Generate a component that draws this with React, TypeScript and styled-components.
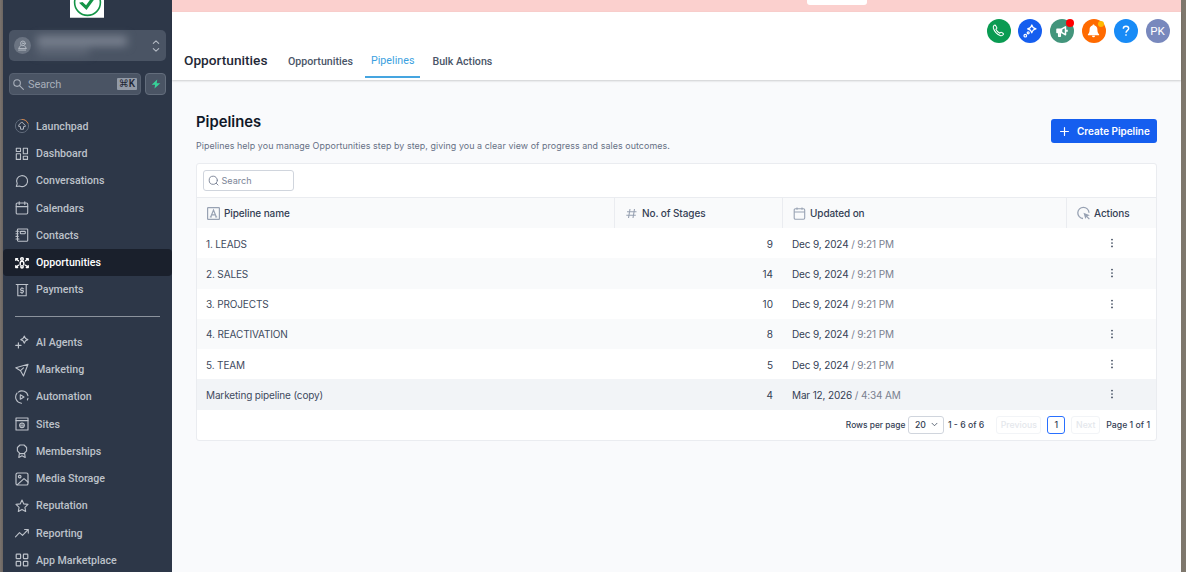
import React from "react";
import styled, { createGlobalStyle } from "styled-components";

const Global = createGlobalStyle`
  * { box-sizing: border-box; }
  html, body { margin: 0; padding: 0; }
  body { font-family: Inter, "Liberation Sans", sans-serif; overflow: hidden; background: #7d766f; }
`;

const Frame = styled.div`
  display: flex;
  width: 1186px;
  height: 572px;
  padding: 0 5px 0 3px;
  overflow: hidden;
  background: linear-gradient(90deg, #7b736d 0, #6b6561 3px, #7d766c 1181px, #7f786d 100%);
`;

const Sidebar = styled.nav`
  width: 169px;
  flex: none;
  display: flex;
  flex-direction: column;
  background: #2d3748;
  font-family: Roboto, "Liberation Sans", sans-serif;
  & > * { flex: none; }
`;

const Logo = styled.div`
  width: 34px;
  height: 17.5px;
  margin-left: 67px;
  overflow: hidden;
  background: #fff;
  border-bottom: 1px solid #c9cbce;
  svg { display: block; }
`;

const Account = styled.div`
  display: flex;
  align-items: center;
  justify-content: space-between;
  width: 157px;
  height: 31px;
  margin: 12.5px 0 0 6px;
  padding: 0 6px 0 5px;
  border-radius: 5px;
  background: #4a5464;
  color: #b4bac4;
  svg { display: block; }
`;

const Avatar = styled.span`
  width: 17px;
  height: 17px;
  border-radius: 50%;
  background: #6b7482;
  display: grid;
  place-items: center;
`;

const Redacted = styled.div`
  flex: 1;
  height: 25px;
  margin: 0 12px 0 6px;
  padding-top: 3px;
  display: flex;
  flex-direction: column;
  gap: 2px;
  filter: blur(4px);
  &::before { content: ""; width: 90px; height: 10px; background: #7a8290; }
  &::after { content: ""; width: 52px; height: 7px; background: #5f6877; }
`;

const SearchRow = styled.div`
  display: flex;
  gap: 4px;
  margin: 12px 0 0 6px;
`;

const SearchBox = styled.div`
  width: 132px;
  height: 22px;
  padding: 0 3px 0 3px;
  display: flex;
  align-items: center;
  border: 1px solid #566070;
  border-radius: 4px;
  background: #4a5464;
  color: #a8afba;
  font-size: 11px;
  span { margin-left: 4px; flex: 1; letter-spacing: -0.1px; }
  kbd {
    font: 500 10px/12px Roboto, "DejaVu Sans", sans-serif;
    color: #1d2533;
    background: #939ba7;
    border-radius: 1px;
    width: 20px;
    text-align: center;
    white-space: nowrap;
  }
`;

const Bolt = styled.div`
  width: 21px;
  height: 22px;
  border-radius: 4px;
  border: 1px solid #636d7c;
  background: #4a5464;
  display: grid;
  place-items: center;
`;

const NavList = styled.div<{ $top: number }>`
  display: flex;
  flex-direction: column;
  margin-top: ${(p) => p.$top}px;
`;

const NavItem = styled.div<{ $active?: boolean }>`
  height: 27.25px;
  flex: none;
  display: flex;
  align-items: center;
  gap: 7px;
  padding-left: 12px;
  border-radius: 4px;
  font-size: 10.65px;
  font-weight: 500;
  color: ${(p) => (p.$active ? "#ffffff" : "#bdc2ca")};
  background: ${(p) => (p.$active ? "#1a202c" : "transparent")};
  svg { flex: none; }
`;

const Divider = styled.div`
  height: 1px;
  margin: 12px 12px 0 12px;
  background: #8c939d;
`;

const Main = styled.main`
  width: 1009px;
  flex: none;
  display: flex;
  flex-direction: column;
  background: #f9fafc;
`;

const Banner = styled.div`
  height: 12px;
  background: #fbd0ce;
  padding-left: 635px;
  &::before {
    content: "";
    display: block;
    width: 60px;
    height: 5px;
    background: #fff;
    border-radius: 0 0 3px 3px;
  }
`;

const Header = styled.header`
  height: 68px;
  background: #fff;
  box-shadow: 0 1px 2px rgba(0, 0, 0, 0.18);
  display: flex;
  flex-direction: column;
  font-family: Roboto, "Liberation Sans", sans-serif;
`;

const RoundRow = styled.div`
  height: 37px;
  padding: 6.5px 11.5px 0 0;
  display: flex;
  justify-content: flex-end;
  gap: 7.8px;
`;

const Round = styled.div<{ $bg: string }>`
  position: relative;
  width: 24px;
  height: 24px;
  border-radius: 50%;
  display: grid;
  place-items: center;
  background: ${(p) => p.$bg};
  color: #fff;
  font-size: 11.5px;
  svg { display: block; }
`;

const Dot = styled.i<{ $color: string; $size: number; $right: number; $top: number }>`
  position: absolute;
  right: ${(p) => p.$right}px;
  top: ${(p) => p.$top}px;
  width: ${(p) => p.$size}px;
  height: ${(p) => p.$size}px;
  border-radius: 50%;
  background: ${(p) => p.$color};
`;

const Tabs = styled.div`
  display: flex;
  padding-left: 12px;
  height: 29px;
`;

const AppTitle = styled.h1`
  margin: 0;
  width: 98px;
  font-size: 13.7px;
  line-height: 22px;
  font-weight: 500;
  color: #1f2937;
`;

const Tab = styled.div<{ $active?: boolean }>`
  height: ${(p) => (p.$active ? 29 : 25)}px;
  padding: ${(p) => (p.$active ? "0 6px" : "1px 6px 0")};
  margin-right: 6px;
  font-size: 10.65px;
  line-height: 23px;
  font-weight: ${(p) => (p.$active ? 400 : 500)};
  letter-spacing: ${(p) => (p.$active ? "0.05px" : "0")};
  white-space: nowrap;
  color: ${(p) => (p.$active ? "#3b9fe0" : "#4a5568")};
  border-bottom: ${(p) => (p.$active ? "2px solid #45a5e0" : "none")};
`;

const Content = styled.section`
  padding: 31px 24px 0 24px;
`;

const Intro = styled.div`
  display: flex;
  justify-content: space-between;
  height: 52px;
`;

const Heading = styled.h2`
  margin: 1px 0 0;
  font-size: 14.8px;
  line-height: 20px;
  font-weight: 600;
  color: #101828;
`;

const Sub = styled.p`
  margin: 7px 0 0;
  font-size: 8.9px;
  line-height: 14px;
  letter-spacing: 0.07px;
  color: #667085;
`;

const Create = styled.button`
  margin-top: 8px;
  width: 106px;
  height: 24px;
  padding: 0 0 0 8px;
  display: flex;
  align-items: center;
  gap: 7px;
  border: 0;
  border-radius: 3px;
  background: #155eef;
  color: #fff;
  font: 600 9.95px Inter, sans-serif;
  white-space: nowrap;
`;

const Card = styled.div`
  width: 961px;
  background: #fff;
  border: 1px solid #eaecf0;
  border-radius: 3px;
`;

const Toolbar = styled.div`
  height: 34px;
  padding: 6px;
  border-bottom: 1px solid #eaecf0;
`;

const Filter = styled.div`
  width: 91px;
  height: 21px;
  padding-left: 4px;
  display: flex;
  align-items: center;
  gap: 2.5px;
  border: 1px solid #d0d5dd;
  border-radius: 3px;
  font-size: 9.1px;
  color: #7b8496;
`;

const Grid = styled.div`
  display: grid;
  grid-template-columns: 417px 168px 284px 90px;
`;

const HeadRow = styled(Grid)`
  height: 30px;
  background: #f9fafb;
`;

const HeadCell = styled.div`
  display: flex;
  align-items: center;
  gap: 4px;
  padding-left: 10px;
  font-size: 10px;
  letter-spacing: -0.1px;
  font-weight: 500;
  color: #344054;
  & + & { border-left: 1px solid #eaecf0; }
  svg { flex: none; }
`;

const BodyRow = styled(Grid)<{ $bg: string }>`
  height: 30.25px;
  padding-top: 1px;
  align-items: center;
  background: ${(p) => p.$bg};
  font-size: 10px;
  letter-spacing: -0.14px;
  color: #475467;
`;

const Name = styled.div`
  padding-left: 9px;
  color: #3e4a5e;
`;
const Count = styled.div`
  padding-right: 9px;
  text-align: right;
  letter-spacing: 0;
  color: #344054;
`;
const When = styled.div`
  padding-left: 10px;
  color: #344054;
  span { color: #79808f; }
`;
const Menu = styled.div`
  display: flex;
  justify-content: center;
  padding: 0 0 1px 2px;
  color: #344054;
`;

const Footer = styled.div`
  height: 30.5px;
  display: flex;
  align-items: center;
  justify-content: flex-end;
  padding-right: 6px;
  font-size: 8.7px;
  font-weight: 500;
  color: #344054;
  white-space: nowrap;
`;

const PerPage = styled.span`
  font-size: 8.4px;
`;

const Pill = styled.div<{ $w: number; $border: string; $color?: string; $m?: string }>`
  width: ${(p) => p.$w}px;
  height: 18px;
  margin: ${(p) => p.$m || "0"};
  display: flex;
  align-items: center;
  justify-content: center;
  gap: 5px;
  border: 1px solid ${(p) => p.$border};
  border-radius: 3px;
  color: ${(p) => p.$color || "#344054"};
`;

type IconProps = { size?: number; w?: number; children: React.ReactNode };
const Icon = ({ size = 14, w = 1.1, children }: IconProps) => (
  <svg width={size} height={size} viewBox="0 0 14 14" fill="none" stroke="currentColor" strokeWidth={w} strokeLinecap="round" strokeLinejoin="round">
    {children}
  </svg>
);

const icons: Record<string, React.ReactNode> = {
  Launchpad: (
    <Icon w={0.9}>
      <circle cx="7" cy="7" r="6.6" stroke="#667080" />
      <path d="M7 .4a6.6 6.6 0 0 1 6 3.8" stroke="#e0853f" />
      <path d="M7 3.2 10.2 6.4v1.2H8.5v2.6H5.5V7.6H3.8V6.4z" />
    </Icon>
  ),
  Dashboard: (
    <Icon>
      <rect x="1.3" y="1.3" width="4.2" height="3.2" /><rect x="8.3" y="1.3" width="4.2" height="5.4" />
      <rect x="1.3" y="6.8" width="4.2" height="5.6" /><rect x="8.3" y="9.2" width="4.2" height="3.2" />
    </Icon>
  ),
  Conversations: <Icon><path d="M1.3 12.5 2.2 9.6A5.5 5.5 0 1 1 4.6 12z" /></Icon>,
  Calendars: <Icon><rect x="1.2" y="2" width="11.5" height="11" rx="1.2" /><path d="M1.2 5.6h11.5M4.2.8v2.6M9.8.8v2.6" /></Icon>,
  Contacts: (
    <Icon>
      <rect x="2.5" y="1" width="10.2" height="12.2" rx=".6" />
      <path d="M1 3.3h3M1 5.8h2.2M1 8.4h2.2M1 11h3" /><rect x="5.3" y="3.4" width="5" height="2.4" rx=".7" />
    </Icon>
  ),
  Opportunities: (
    <Icon w={1.45}>
      <circle cx="7" cy="3" r="1.3" /><path d="M5.2 9V7.1a1.8 1.8 0 0 1 3.6 0V9" /><circle cx="7" cy="10.8" r="1.2" />
      <path d="M.8 4.3V2.6h1.8M13.2 4.3V2.6h-1.8M1.2 3l2.2 1.8M12.800 3l-2.200 1.800M.8 9.700v1.700h1.800M13.200 9.700v1.700h-1.800M1.200 11l2.200-1.800M12.800 11l-2.200-1.800" />
    </Icon>
  ),
  Payments: (
    <Icon>
      <path d="M1.2 1.5h11.6M2.8 1.5v11.3h8.4V1.5" />
      <path d="M8.6 5.7H6.4a.9.9 0 0 0 0 1.8h1.2a.9.9 0 0 1 0 1.8H5.4M7 4.6v1M7 9.4v1" />
    </Icon>
  ),
  "AI Agents": <Icon w={1.2}><path d="M9.3 1.2c.5 2 1.3 2.8 3.5 3.4-2.2.6-3 1.4-3.5 3.5-.5-2.1-1.3-2.9-3.5-3.5 2.2-.6 3-1.4 3.5-3.4zM3.4 7.800v5.200M.8 10.400H6" /></Icon>,
  Marketing: <Icon><path d="M13 1.2.8 4.8l4.7 2.9L8.5 13zM5.5 7.7l3-2.8" /></Icon>,
  Automation: (
    <Icon>
      <path d="M6.5 13.2A6.2 6.2 0 0 1 2 3.2M3.3 2.1A6.2 6.2 0 0 1 13 5.8M13 8.2 12.4 10M5.3 4.8v4.5L9 7z" />
    </Icon>
  ),
  Sites: (
    <Icon>
      <rect x="1" y="1" width="12" height="12" /><path d="M1 3.6h12" /><circle cx="7" cy="8.3" r="2.3" /><path d="M4.7 8.3h4.6M7 6.2v4.2" strokeWidth=".7" />
    </Icon>
  ),
  Memberships: <Icon><path d="M5 1h4l2.6 2.5v3.4L9 9.6H5L2.4 6.9V3.5zM4.4 9.4l-.6 4L7 11.8l3.2 1.6-.6-4" /></Icon>,
  "Media Storage": <Icon w={1.2}><rect x="1" y="1" width="12" height="12" rx="1.6" /><circle cx="4.7" cy="4.6" r="1.3" /><path d="M2.4 12.6 9 6.6l4 3.4" /></Icon>,
  Reputation: <Icon><path d="m7 1.1 1.8 3.8 4.2.5-3.1 2.9.8 4.2L7 10.4l-3.7 2.1.8-4.2L1 5.4l4.2-.5z" /></Icon>,
  Reporting: <Icon><path d="m.5 10.8 4-4.2 3 2.7 5.7-5.8M9.6 3.5h3.7v3.6" /></Icon>,
  "App Marketplace": (
    <Icon w={1.2}>
      <rect x="1.2" y="1.2" width="4.4" height="4.4" rx=".6" /><rect x="8.4" y="1.2" width="4.4" height="4.4" rx=".6" />
      <rect x="1.2" y="8.4" width="4.4" height="4.4" rx=".6" /><rect x="8.4" y="8.4" width="4.4" height="4.4" rx=".6" />
    </Icon>
  ),
};

const primary = ["Launchpad", "Dashboard", "Conversations", "Calendars", "Contacts", "Opportunities", "Payments"];
const secondary = ["AI Agents", "Marketing", "Automation", "Sites", "Memberships", "Media Storage", "Reputation", "Reporting", "App Marketplace"];

const rows = [
  ["1. LEADS", "9", "Dec 9, 2024", "9:21 PM"],
  ["2. SALES", "14", "Dec 9, 2024", "9:21 PM"],
  ["3. PROJECTS", "10", "Dec 9, 2024", "9:21 PM"],
  ["4. REACTIVATION", "8", "Dec 9, 2024", "9:21 PM"],
  ["5. TEAM", "5", "Dec 9, 2024", "9:21 PM"],
  ["Marketing pipeline (copy)", "4", "Mar 12, 2026", "4:34 AM"],
];
const rowBg = (i: number) => (i === 5 ? "#f2f4f7" : i % 2 ? "#f9fafb" : "#ffffff");

export default function App() {
  return (
    <>
      <Global />
      <Frame>
        <Sidebar>
          <Logo>
            <svg width="34" height="17" viewBox="0 0 34 17" fill="none">
              <circle cx="17.5" cy="2.5" r="12.9" stroke="#149447" strokeWidth="1.6" />
              <path d="M9 2.8 12.500 2l3.600 3.300L22-3h4L16.500 10z" fill="#149447" />
            </svg>
          </Logo>
          <Account>
            <Avatar>
              <Icon size={11} w={1.2}>
                <circle cx="7.5" cy="4.3" r="3" /><circle cx="7.5" cy="4.3" r=".8" />
                <path d="M4.5 7.2 2 10.8h10L10 7.8M2 12.8h9" />
              </Icon>
            </Avatar>
            <Redacted />
            <svg width="8" height="14" viewBox="0 0 8 14" fill="none" stroke="currentColor" strokeWidth="1.1" strokeLinecap="round" strokeLinejoin="round">
              <path d="m1.3 4.4 2.7-2.6 2.7 2.6M1.3 9.6 4 12.2l2.7-2.6" />
            </svg>
          </Account>
          <SearchRow>
            <SearchBox>
              <Icon size={11} w={1.4}><circle cx="5.2" cy="5.2" r="4.2" /><path d="m8.4 8.4 4.8 4.8" /></Icon>
              <span>Search</span>
              <kbd>⌘K</kbd>
            </SearchBox>
            <Bolt>
              <svg width="10" height="10" viewBox="0 0 10 10" fill="#37d399"><path d="M6.200.4.700 5.800h3.400L3.500 9.600 9.300 4.200H5.700z" /></svg>
            </Bolt>
          </SearchRow>
          <NavList $top={17.75}>
            {primary.map((n) => (
              <NavItem key={n} $active={n === "Opportunities"}>{icons[n]}{n}</NavItem>
            ))}
          </NavList>
          <Divider />
          <NavList $top={12.25}>
            {secondary.map((n) => (
              <NavItem key={n}>{icons[n]}{n}</NavItem>
            ))}
          </NavList>
        </Sidebar>

        <Main>
          <Banner />
          <Header>
            <RoundRow>
              <Round $bg="#0a9b52">
                <Icon size={13} w={1.1}>
                  <path d="M2.2 1.6c-.9.8-1.1 1.7-.7 3 1.2 3.6 3.6 6.2 7.2 7.7 1.4.6 2.5.3 3.3-.7.5-.6.4-1.2-.2-1.6l-1.5-1c-.5-.3-.9-.2-1.3.2l-.6.7C6.5 9 5 7.4 4.2 5.6l.7-.6c.4-.4.5-.8.2-1.3L4 1.8c-.4-.7-1.1-.8-1.8-.2z" />
                </Icon>
              </Round>
              <Round $bg="#155eef">
                <Icon size={14} w={1.2}>
                  <path d="M8.8.8c.5 2.6 1.4 3.5 4.2 4.1-2.8.6-3.7 1.5-4.2 4.1C8.3 6.4 7.4 5.5 4.6 4.9 7.4 4.3 8.3 3.4 8.8.8z" />
                  <circle cx="5.2" cy="8.8" r="1" /><circle cx="2.3" cy="11.7" r="1.3" />
                </Icon>
              </Round>
              <Round $bg="#43957c">
                <svg width="14" height="14" viewBox="0 0 14 14" fill="none" stroke="#fff" strokeWidth="1.5" strokeLinejoin="round">
                  <path d="M2 5.200h4.500v3.200H2z" fill="#fff" /><path d="M6.500 5.200 10.500 2.800v8L6.500 8.400M12 5.800v2" /><path d="M3.700 8.400v3.800h1.600V8.400" />
                </svg>
                <Dot $color="#ff0000" $size={8} $right={0} $top={0} />
              </Round>
              <Round $bg="#ff6a00">
                <svg width="13" height="14" viewBox="0 0 13 14" fill="#fff">
                  <path d="M6.5.6c.6 0 1 .4 1 1 1.900.5 2.900 2 2.900 4 0 2.600.6 3.700 1.700 4.700v.9H.9v-.9c1.100-1 1.700-2.100 1.700-4.700 0-2 1-3.500 2.900-4 0-.6.4-1 1-1zM5 11.800h3a1.500 1.500 0 0 1-3 0z" />
                </svg>
                <Dot $color="#ffb800" $size={6} $right={1.5} $top={2} />
              </Round>
              <Round $bg="#188bf6">
                <svg width="10" height="12" viewBox="0 0 10 12" fill="none" stroke="#fff" strokeWidth="1.4">
                  <path d="M2.3 3.7C2.3 2.2 3.5 1.3 5 1.3s2.7.9 2.7 2.3C7.7 5.3 5 5.5 5 7.7M5 9.2v1.6" />
                </svg>
              </Round>
              <Round $bg="#7888bd">PK</Round>
            </RoundRow>
            <Tabs>
              <AppTitle>Opportunities</AppTitle>
              <Tab>Opportunities</Tab>
              <Tab $active>Pipelines</Tab>
              <Tab>Bulk Actions</Tab>
            </Tabs>
          </Header>

          <Content>
            <Intro>
              <div>
                <Heading>Pipelines</Heading>
                <Sub>Pipelines help you manage Opportunities step by step, giving you a clear view of progress and sales outcomes.</Sub>
              </div>
              <Create>
                <Icon size={11} w={1.5}><path d="M7 2v10M2 7h10" /></Icon>
                Create Pipeline
              </Create>
            </Intro>

            <Card>
              <Toolbar>
                <Filter>
                  <Icon size={11} w={1.2}><circle cx="6.7" cy="6.7" r="5.2" /><path d="m10.6 10.6 2.2 2.2" /></Icon>
                  Search
                </Filter>
              </Toolbar>
              <HeadRow>
                <HeadCell>
                  <svg width="13" height="13" viewBox="0 0 13 13" fill="none" stroke="#98a2b3">
                    <rect x=".6" y=".6" width="11.8" height="11.8" rx=".6" strokeWidth="1.2" />
                    <path d="M3.7 10 6.5 3l2.8 7M4.7 7.8h3.6M2.8 10h2M8.2 10h2" strokeWidth="1.2" />
                  </svg>
                  Pipeline name
                </HeadCell>
                <HeadCell>
                  <svg width="13" height="13" viewBox="0 0 13 13" fill="none" stroke="#98a2b3" strokeWidth="1.1">
                    <path d="M5 2 3.5 11M9.5 2 8 11M2 4.8h9.5M1.3 8.2h9.5" />
                  </svg>
                  No. of Stages
                </HeadCell>
                <HeadCell>
                  <svg width="13" height="13" viewBox="0 0 13 13" fill="none" stroke="#98a2b3" strokeWidth="1.1">
                    <rect x="1.2" y="1.7" width="10.5" height="10.6" rx="1.2" /><path d="M1.2 5h10.5M4 .5v2.2M9 .5v2.2" />
                  </svg>
                  Updated on
                </HeadCell>
                <HeadCell>
                  <svg width="13" height="14" viewBox="0 0 13 14" fill="none" stroke="#98a2b3" strokeWidth="1.3">
                    <path d="M6 12.5A5.6 5.6 0 1 1 12 6.700" /><path d="m6.500 6.700 6.300 2.500-2.500 1 2.500 2.600-.9.8-2.500-2.500-1.100 2z" fill="#98a2b3" stroke="none" />
                  </svg>
                  Actions
                </HeadCell>
              </HeadRow>
              {rows.map(([name, count, date, time], i) => (
                <BodyRow key={name} $bg={rowBg(i)}>
                  <Name>{name}</Name>
                  <Count>{count}</Count>
                  <When>{date} <span>/ {time}</span></When>
                  <Menu>
                    <svg width="4" height="10" viewBox="0 0 4 10" fill="currentColor">
                      <circle cx="2" cy="1.6" r=".85" /><circle cx="2" cy="5" r=".85" /><circle cx="2" cy="8.4" r=".85" />
                    </svg>
                  </Menu>
                </BodyRow>
              ))}
              <Footer>
                <PerPage>Rows per page</PerPage>
                <Pill $w={36} $border="#d0d5dd" $m="0 3.5px 0 3px">
                  20
                  <Icon size={7} w={1.5}><path d="m2 4.5 5 5 5-5" /></Icon>
                </Pill>
                1 - 6 of 6
                <Pill $w={45} $border="#f2f4f7" $color="#e4e7ec" $m="0 6px 0 12px">Previous</Pill>
                <Pill $w={18} $border="#2970ff">1</Pill>
                <Pill $w={29} $border="#f2f4f7" $color="#e4e7ec" $m="0 6px">Next</Pill>
                Page 1 of 1
              </Footer>
            </Card>
          </Content>
        </Main>
      </Frame>
    </>
  );
}
